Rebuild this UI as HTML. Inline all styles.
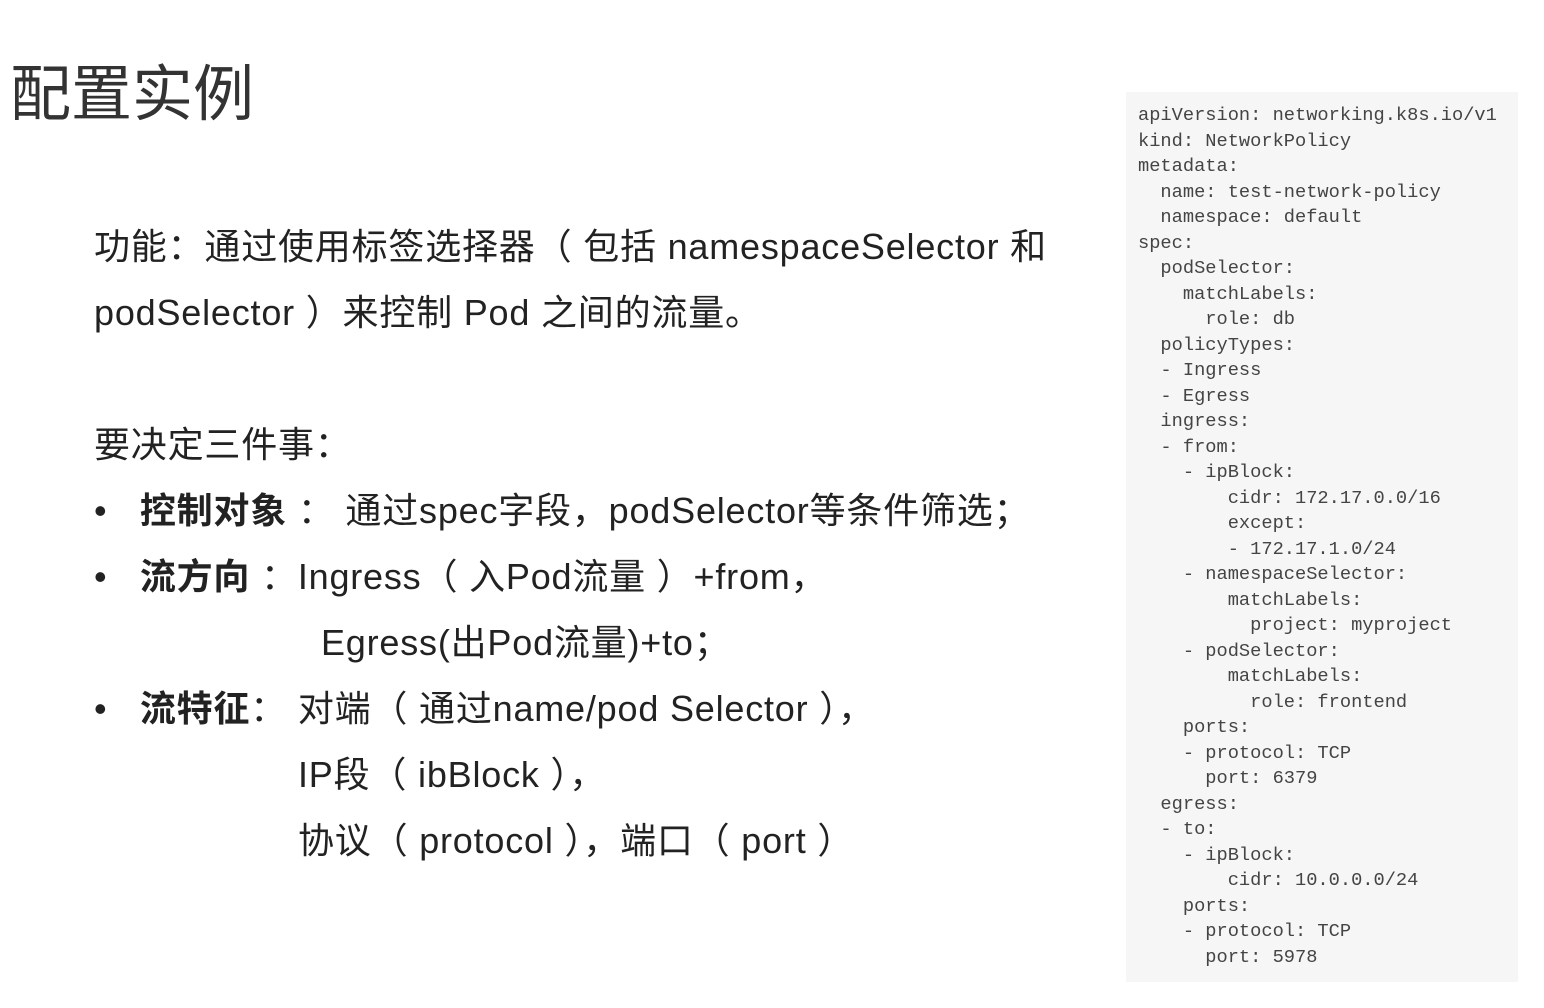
<!DOCTYPE html>
<html><head><meta charset="utf-8"><style>
body{margin:0;width:1544px;height:1008px;background:#fff;position:relative;overflow:hidden;font-family:"Liberation Sans","Noto Sans CJK SC",sans-serif;color:#222}
.t{position:absolute;white-space:nowrap;font-size:36px;line-height:40px;letter-spacing:0.8px}
.title{position:absolute;left:10px;top:58px;font-size:61px;line-height:72px;color:#333}
b{font-weight:bold}
.code{position:absolute;left:1126px;top:92px;width:392px;height:890px;background:#f6f6f6}
pre{position:absolute;left:1138px;top:103px;margin:0;font-family:"Liberation Mono",monospace;font-size:18.7px;line-height:25.5px;color:#444}
</style></head><body>
<div class="title">配置实例</div>
<div class="t" style="left:94px;top:227px">功能：通过使用标签选择器（ 包括 namespaceSelector 和</div>
<div class="t" style="left:94px;top:293px">podSelector ）来控制 Pod 之间的流量。</div>
<div class="t" style="left:94px;top:425px">要决定三件事：</div>
<div class="t" style="left:94px;top:491px">•&nbsp;&nbsp;&nbsp;<b>控制对象</b> ： 通过spec字段，podSelector等条件筛选；</div>
<div class="t" style="left:94px;top:557px">•&nbsp;&nbsp;&nbsp;<b>流方向</b> ：Ingress（ 入Pod流量 ）+from，</div>
<div class="t" style="left:321px;top:623px">Egress(出Pod流量)+to；</div>
<div class="t" style="left:94px;top:689px">•&nbsp;&nbsp;&nbsp;<b>流特征</b>： 对端（ 通过name/pod Selector ），</div>
<div class="t" style="left:298px;top:755px">IP段（ ibBlock ），</div>
<div class="t" style="left:298px;top:821px">协议（ protocol ），端口（ port ）</div>
<div class="code"></div>
<pre>apiVersion: networking.k8s.io/v1
kind: NetworkPolicy
metadata:
  name: test-network-policy
  namespace: default
spec:
  podSelector:
    matchLabels:
      role: db
  policyTypes:
  - Ingress
  - Egress
  ingress:
  - from:
    - ipBlock:
        cidr: 172.17.0.0/16
        except:
        - 172.17.1.0/24
    - namespaceSelector:
        matchLabels:
          project: myproject
    - podSelector:
        matchLabels:
          role: frontend
    ports:
    - protocol: TCP
      port: 6379
  egress:
  - to:
    - ipBlock:
        cidr: 10.0.0.0/24
    ports:
    - protocol: TCP
      port: 5978</pre>
</body></html>
